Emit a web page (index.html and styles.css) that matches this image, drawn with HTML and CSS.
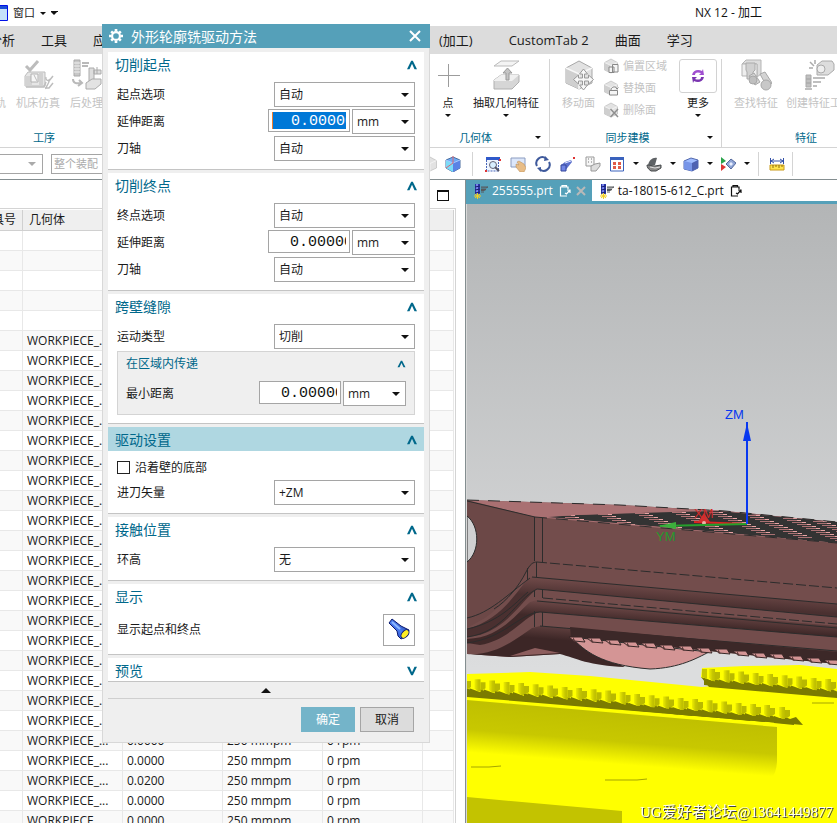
FILE: index.html
```
<!DOCTYPE html>
<html lang="zh-CN">
<head>
<meta charset="utf-8">
<title>NX 12 - 加工</title>
<link rel="stylesheet" href="styles.css">
</head>
<body>
<svg class="defs" aria-hidden="true">
  <defs>
    <symbol id="i-chev" viewBox="0 0 12 12"><path d="M0 11 5 1h2l5 10H9L6 4.500 3 11z" fill="#00688b"/></symbol>
    <symbol id="i-drill" viewBox="0 0 16 16"><path d="M3 1h5v10H3z" fill="#2a35a8"/><path d="M4 1h2v10H4z" fill="#7883ea"/><path d="M3 4l5-1M3 7l5-1M3 10l5-1" stroke="#1a1f70"/><path d="M9 4h7l-2 1H9M9 6.500h5l-2 1H9M9 9h3" fill="none" stroke="#56595c"/><path d="M5.500 10v6M2 13h7M3 11l5 4M8 11l-5 4" stroke="#f5d020"/></symbol>
    <symbol id="i-clip" viewBox="0 0 12 12"><path d="M8 11H1.500V2H9v2M3 2V.700h4.500V2M11 5 7.500 9 6 8M8 5h3v3" fill="none" stroke="currentColor" stroke-width="1.200"/></symbol>
    <symbol id="i-cube" viewBox="0 0 32 32"><path d="M3 9 16 2l13 7v15l-13 6L3 24z" fill="#e2e2e2" stroke="#a8a8a8"/><path d="M3 9l13 6v15L3 24z" fill="#cfcfcf"/><path d="M3 9l13 6 13-6M16 15v15" fill="none" stroke="#f8f8f8" stroke-width="1.500"/></symbol>
    <linearGradient id="g-lamp" x1="0" y1="1" x2="1" y2="0"><stop offset="0" stop-color="#1735b5"/><stop offset=".5" stop-color="#4a7df0"/><stop offset="1" stop-color="#101e70"/></linearGradient>
  </defs>
</svg>

<header class="titlebar">
  <svg class="win-icon" viewBox="0 0 8 16"><path d="M-8 .500H7.500v15H-8z" fill="#c6e2fa" stroke="#0010e8"/><path d="M0 1h7v3H0z" fill="#1d4fd8"/></svg>
  <button class="window-menu">窗口 <i class="tri"></i><i class="tri barred"></i></button>
  <h1>NX 12 - 加工</h1>
</header>

<nav class="menubar">
  <div class="menu-left"><a href="#">分析</a><a href="#">工具</a><a href="#">应用</a></div>
  <div class="menu-right"><a href="#">(加工)</a><a href="#">CustomTab 2</a><a href="#">曲面</a><a href="#">学习</a></div>
</nav>

<section class="ribbon">
  <div class="group g-process">
    <div class="tools">
      <button class="tool off t-path"><svg viewBox="0 0 32 32"></svg>刀轨</button>
      <button class="tool off t-sim"><svg viewBox="0 0 32 32"><path d="M3 17l3-4h17v14H3z" fill="#e6e6e6" stroke="#bcbcbc"/><path d="M3 17h7v10H3z" fill="#d3d3d3"/><path d="M9 15h7v8H9z" fill="#f6f6f6" stroke="#b2b2b2"/><path d="M12 16l3 6M18 14v12M20 14v12" stroke="#bcbcbc"/><path d="M4 7l4 4 8-9" fill="none" stroke="#bcbcbc" stroke-width="3"/><path d="M4 28h18l2-5M24 18c-1 3 2 4 3 3 1 4-4 6-3 9M31 17l-4 5M31 24l-4 5h-4" fill="none" stroke="#bdbdbd" stroke-width="1.500"/></svg>机床仿真</button>
      <button class="tool off"><svg viewBox="0 0 32 32"><path d="M3 1h6v16H3z" fill="#c8c8c8" stroke="#aaa"/><path d="M3 4h6M3 7h6M3 10h6M3 13h6" stroke="#f0f0f0"/><path d="M11 4h7M11 7h6M2 20c0 4 3 5 8 4M8 21l3 3-4 3" fill="none" stroke="#b9b9b9" stroke-width="2"/><path d="M18 9h5v13h-5zM26 8v7M23 11h7v4h-7z" fill="#ddd" stroke="#aaa"/><path d="M15 24l6-4h9v5l-6 5h-9z" fill="#e3e3e3" stroke="#aaa"/></svg>后处理</button>
    </div>
    <div class="group-name">工序</div>
  </div>
  <div class="group g-geom">
    <div class="tools">
      <button class="tool t-point"><svg viewBox="0 0 32 32"><path d="M16.500 5v23M6 16.500h22" stroke="#9c9c9c"/></svg>点<i class="tri"></i></button>
      <button class="tool"><svg viewBox="0 0 32 32"><path d="M11 2h18l-7 5H4z" fill="#f4f4f4" stroke="#bbb"/><path d="M4 21l7-5h18v7l-7 7H4z" fill="#d6d6d6" stroke="#b0b0b0"/><path d="M4 21l7-5h18l-7 6H4z" fill="#f0f0f0"/><path d="M16 21v-7h-3l4.500-5 4.500 5h-3v7z" fill="#c4c4c4" stroke="#999"/></svg>抽取几何特征<i class="tri"></i></button>
    </div>
    <div class="group-name">几何体<i class="tri"></i></div>
  </div>
  <div class="group g-sync">
    <div class="tools">
      <button class="tool off"><svg viewBox="0 0 32 32"><use href="#i-cube"/><path d="M20.500 10l4 5h-3v4h4v-3l5 4.500-5 4.500v-3h-4v4h3l-4 5-4-5h3v-4h-4v3l-5-4.500 5-4.500v3h4v-4h-3z" fill="#f8f8f8" stroke="#999"/></svg>移动面</button>
      <div class="stack">
        <button class="line off"><svg viewBox="0 0 32 32"><use href="#i-cube"/><path d="M12 18h10v11H12zM19 13h11v15H19z" fill="#f5f5f5" stroke="#888" stroke-width="2"/></svg>偏置区域</button>
        <button class="line off"><svg viewBox="0 0 32 32"><use href="#i-cube"/><path d="M13 21h16v9H13zM16 21c0-9 11-9 12-3M26 15l2 3 3-3" fill="#f5f5f5" stroke="#888" stroke-width="2"/></svg>替换面</button>
        <button class="line off"><svg viewBox="0 0 32 32"><use href="#i-cube"/><path d="M15 14l15 16M30 14 15 30" stroke="#8f8f8f" stroke-width="3"/></svg>删除面</button>
      </div>
      <button class="tool more"><span class="more-box"><svg viewBox="0 0 16 16"><path d="M2 7c1-5 6-6 10-4l1-2 1 6H9l2-2C8 4 5 4 5 7z" fill="#a04fd0"/><path d="M14 9c-1 5-6 6-10 4l-1 2-1-6h5l-2 2c3 1 6 1 6-2z" fill="#7a35b0"/></svg></span>更多<i class="tri"></i></button>
    </div>
    <div class="group-name">同步建模<i class="tri"></i></div>
  </div>
  <div class="group g-feature">
    <div class="tools">
      <button class="tool off"><svg viewBox="0 0 32 32"><path d="M2 5l4-4h15v14l-4 3V5z" fill="#ddd" stroke="#b5b5b5"/><path d="M2 5h15v12H2z" fill="#eee" stroke="#b5b5b5"/><path d="M6 4h9v7l-2 2v7H7v-7l-1-2z" fill="#d0d0d0" stroke="#aaa"/><path d="M9 17l5-3 6 9-5 3zM20 15l5-2 7 11-5 4z" fill="#d4d4d4" stroke="#a8a8a8"/><circle cx="13" cy="21" r="4" fill="#bfbfbf" stroke="#a8a8a8"/><circle cx="26" cy="26" r="5" fill="#c8c8c8" stroke="#a8a8a8"/></svg>查找特征</button>
      <button class="tool off"><svg viewBox="0 0 32 32"><path d="M14 6l5-4h10l2 3v6l-6 5H14z" fill="#ddd" stroke="#aaa"/><circle cx="18" cy="10" r="4" fill="#eee" stroke="#aaa"/><path d="M3 16h5v12H3z" fill="#c0c0c0" stroke="#aaa"/><path d="M3 20h5M3 24h5M2 30h7M10 19h12M10 23h8M10 27h4M7 3l4 4M12 1v4M6 9h4" stroke="#aaa" stroke-width="1.500"/></svg>创建特征工艺</button>
    </div>
    <div class="group-name">特征</div>
  </div>
</section>

<section class="toolbar">
  <div class="filters">
    <button class="filter f-type" aria-label="类型过滤器"><i class="tri"></i></button>
    <button class="filter f-scope">整个装配</button>
  </div>
  <button class="ico" aria-label="线框"><svg viewBox="0 0 32 32"><use href="#i-cube"/></svg></button>
  <button class="ico shaded" aria-label="着色"><svg viewBox="0 0 16 16"><path d="M1 4l7-3 7 3v8l-7 4-7-4z" fill="#6caaf5" stroke="#4c6e9f"/><path d="M1 4l7 3v9l-7-4z" fill="#7cdcf8"/><path d="M8 7l7-3v8l-7 4z" fill="#5a83e5"/><path d="M1 4l7 3 7-3" fill="none" stroke="#a8c8ff"/><path d="M8 0v7M8 7l-7 5" fill="none" stroke="#dd6675"/></svg></button>
  <i class="sep"></i>
  <button class="ico" aria-label="缩放"><svg viewBox="0 0 16 16"><path d="M1 1h14v3H1z" fill="#2f59ca"/><path d="M1.500 4v11h12V4" fill="#eef5ff" stroke="#4966b8" stroke-dasharray="2 1"/><circle cx="8" cy="9" r="3.500" fill="#d8efff" stroke="#667"/><path d="M10 11l4 4" stroke="#556" stroke-width="2"/><path d="M14 3h2v2h-2zM0 14h2v2H0z" fill="#e03434"/></svg></button>
  <button class="ico" aria-label="平移"><svg viewBox="0 0 16 16"><path d="M1 2h14v9H1z" fill="#dce7fa" stroke="#8b9cc0"/><path d="M6 8l3 1-2-3 2-1 5 3 2 4-2 4h-4L6 11z" fill="#e8bd87" stroke="#b68850" stroke-width=".5"/></svg></button>
  <button class="ico" aria-label="旋转"><svg viewBox="0 0 16 16"><path d="M2 10A6 6 0 0 1 11 2.500M14 6A6 6 0 0 1 5 13.500" fill="none" stroke="#3f5a9c" stroke-width="2"/><path d="M10 0l4 4-5 1zM6 11l-4 1 4 4z" fill="#3f5a9c"/></svg></button>
  <button class="ico" aria-label="透视"><svg viewBox="0 0 16 16"><path d="M1 9l4-3 6-2 1 2-4 5-3 4H1z" fill="#5c70cc"/><path d="M1 9h5v6H1z" fill="#6f84e5" stroke="#35479a"/><path d="M5 7l6-2" stroke="#e1e7ff"/><path d="M13 1h2v2h-2z" fill="#d33"/></svg></button>
  <button class="ico" aria-label="属性"><svg viewBox="0 0 16 16"><path d="M1 1h8v9H1z" fill="#f6f6f6" stroke="#999"/><path d="M3 3h1M6 3h1M3 6h1M6 6h1" stroke="#777"/><path d="M6 10l4-2 5-1v3l-4 5H6z" fill="#ddd" stroke="#999"/></svg></button>
  <button class="ico drop" aria-label="布局"><svg viewBox="0 0 16 16"><path d="M1.500 2h13v13h-13z" fill="#fff" stroke="#3a62bd"/><path d="M1 1h14v3H1z" fill="#3a62bd"/><path d="M4 6h3v3H4zM9 6h3v3H9zM4 10h3v3H4zM9 10h3v3H9z" fill="#e05a48"/></svg><i class="tri"></i></button>
  <button class="ico drop" aria-label="渲染"><svg viewBox="0 0 16 16"><path d="M2 9C3 4 7 1 11 2l-2 7z" fill="#5e6265"/><path d="M1 9l8 1 6-1v3l-5 3H5c-3-2-4-4-4-6z" fill="#888" stroke="#44484a"/><path d="M4 11l5 1 5-1" stroke="#ddd" fill="none"/></svg><i class="tri"></i></button>
  <button class="ico drop" aria-label="视图方位"><svg viewBox="0 0 16 16"><path d="M1 5l7-3 7 2v8l-6 3-8-2z" fill="#9fbcff" stroke="#5268ad"/><path d="M9 7l6-3v8l-6 3z" fill="#4e62b2"/><path d="M1 5l8 2v8l-8-2z" fill="#7795e8"/></svg><i class="tri"></i></button>
  <button class="ico drop" aria-label="剖切"><svg viewBox="0 0 16 16"><path d="M1 1l5 4-5 3z" fill="#29a34a"/><path d="M1 8l5 3-5 4z" fill="#dd3434"/><path d="M6 8l5-5 5 4-5 6z" fill="#8fa5d6" stroke="#566a9d"/><path d="M9 8l2-2 2 2-2 2z" fill="#e9efff"/></svg><i class="tri"></i></button>
  <i class="sep"></i>
  <button class="ico ruler" aria-label="测量"><svg viewBox="0 0 16 16"><path d="M1.500 2v6M14.500 2v6M2 5h12M5 3 2 5l3 2M11 3l3 2-3 2" fill="none" stroke="#3250a8"/><path d="M1 9h14v5H1z" fill="#ffe34d" stroke="#c99a1a"/><path d="M4 9v3M7 9v2M10 9v3M13 9v2" stroke="#8b6c10"/></svg></button>
  <i class="sep"></i>
</section>

<main class="work">
  <section class="navigator">
    <div class="nav-head"><button class="maximize" aria-label="最大化"></button></div>
    <div class="table-wrap">
      <table>
        <colgroup><col class="c0"><col class="c"><col class="c"><col class="c"><col class="c"><col></colgroup>
        <thead><tr><th><span>刀具号</span></th><th>几何体</th><th></th><th></th><th></th><th></th></tr></thead>
        <tbody>
          <tr><td></td><td></td><td></td><td></td><td></td><td></td></tr>
          <tr><td></td><td></td><td></td><td></td><td></td><td></td></tr>
          <tr><td></td><td></td><td></td><td></td><td></td><td></td></tr>
          <tr><td></td><td></td><td></td><td></td><td></td><td></td></tr>
          <tr><td></td><td></td><td></td><td></td><td></td><td></td></tr>
          <tr><td></td><td>WORKPIECE_...</td><td></td><td></td><td></td><td></td></tr>
          <tr><td></td><td>WORKPIECE_...</td><td></td><td></td><td></td><td></td></tr>
          <tr><td></td><td>WORKPIECE_...</td><td></td><td></td><td></td><td></td></tr>
          <tr><td></td><td>WORKPIECE_...</td><td></td><td></td><td></td><td></td></tr>
          <tr><td></td><td>WORKPIECE_...</td><td></td><td></td><td></td><td></td></tr>
          <tr><td></td><td>WORKPIECE_...</td><td></td><td></td><td></td><td></td></tr>
          <tr><td></td><td>WORKPIECE_...</td><td></td><td></td><td></td><td></td></tr>
          <tr><td></td><td>WORKPIECE_...</td><td></td><td></td><td></td><td></td></tr>
          <tr><td></td><td>WORKPIECE_...</td><td></td><td></td><td></td><td></td></tr>
          <tr><td></td><td>WORKPIECE_...</td><td></td><td></td><td></td><td></td></tr>
          <tr><td></td><td>WORKPIECE_...</td><td></td><td></td><td></td><td></td></tr>
          <tr><td></td><td>WORKPIECE_...</td><td></td><td></td><td></td><td></td></tr>
          <tr><td></td><td>WORKPIECE_...</td><td></td><td></td><td></td><td></td></tr>
          <tr><td></td><td>WORKPIECE_...</td><td></td><td></td><td></td><td></td></tr>
          <tr><td></td><td>WORKPIECE_...</td><td></td><td></td><td></td><td></td></tr>
          <tr><td></td><td>WORKPIECE_...</td><td></td><td></td><td></td><td></td></tr>
          <tr><td></td><td>WORKPIECE_...</td><td></td><td></td><td></td><td></td></tr>
          <tr><td></td><td>WORKPIECE_...</td><td></td><td></td><td></td><td></td></tr>
          <tr><td></td><td>WORKPIECE_...</td><td></td><td></td><td></td><td></td></tr>
          <tr><td></td><td>WORKPIECE_...</td><td></td><td></td><td></td><td></td></tr>
          <tr><td></td><td>WORKPIECE_...</td><td>0.0000</td><td>250 mmpm</td><td>0 rpm</td><td></td></tr>
          <tr><td></td><td>WORKPIECE_...</td><td>0.0000</td><td>250 mmpm</td><td>0 rpm</td><td></td></tr>
          <tr><td></td><td>WORKPIECE_...</td><td>0.0200</td><td>250 mmpm</td><td>0 rpm</td><td></td></tr>
          <tr><td></td><td>WORKPIECE_...</td><td>0.0000</td><td>250 mmpm</td><td>0 rpm</td><td></td></tr>
          <tr><td></td><td>WORKPIECE_...</td><td>0.0000</td><td>250 mmpm</td><td>0 rpm</td><td></td></tr>
        </tbody>
      </table>
    </div>
  </section>

  <section class="graphics">
    <div class="tabs">
      <a class="tab active" href="#"><svg class="drill"><use href="#i-drill"/></svg>255555.prt<svg class="clip"><use href="#i-clip"/></svg><svg class="tab-x" viewBox="0 0 10 10"><path d="M1 1l8 8M9 1 1 9" stroke="#b9b9b9" stroke-width="2"/></svg></a>
      <a class="tab" href="#"><svg class="drill"><use href="#i-drill"/></svg>ta-18015-612_C.prt<svg class="clip"><use href="#i-clip"/></svg></a>
    </div>
    <svg class="scene" viewBox="467 204 370 619" preserveAspectRatio="xMinYMin slice">
      <defs>
        <linearGradient id="sky" x1="0" y1="0" x2="0" y2="1"><stop offset="0" stop-color="#b3b5b6"/><stop offset=".75" stop-color="#dcddde"/></linearGradient>
        <linearGradient id="band" gradientUnits="userSpaceOnUse" x1="680" y1="588" x2="679" y2="604"><stop offset="0" stop-color="#6d4847"/><stop offset="1" stop-color="#4a3030"/></linearGradient>
        <linearGradient id="band2" gradientUnits="userSpaceOnUse" x1="680" y1="610" x2="679" y2="625"><stop offset="0" stop-color="#6d4847"/><stop offset="1" stop-color="#402929"/></linearGradient>
        <linearGradient id="band3" gradientUnits="userSpaceOnUse" x1="680" y1="638" x2="679" y2="650"><stop offset="0" stop-color="#5c3d3c"/><stop offset="1" stop-color="#3c2626"/></linearGradient>
        <linearGradient id="olive" gradientUnits="userSpaceOnUse" x1="620" y1="714" x2="616" y2="764"><stop offset="0" stop-color="#c0c000"/><stop offset=".55" stop-color="#c8c800"/><stop offset="1" stop-color="#ffff00"/></linearGradient>
        <linearGradient id="toothg"><stop offset="0" stop-color="#eeee00"/><stop offset=".6" stop-color="#c6c600"/><stop offset="1" stop-color="#bcbc00"/></linearGradient>
        <clipPath id="deck"><path d="M540 517 577 515 672 511 720 511 837 522V543L760 536 650 526z"/></clipPath>
        <g id="tooth"><path d="M-3 11 8 15V12L13 14 17 16V20L-3 18z" fill="#7b7b00"/><path d="M2 2h6v12H5L2 11z" fill="url(#toothg)"/><path d="M8 5h5v6l-3 2H8z" fill="#b9b900"/></g>
        <g id="tooth4"><use href="#tooth"/><use href="#tooth" x="14.500" y="1.300"/><use href="#tooth" x="29" y="2.600"/><use href="#tooth" x="43.500" y="3.900"/></g>
        <g id="nick"><path d="M0 0h13l3 5-11-1z" fill="#d49595" stroke="#382727"/><path d="M4 0l3 5-3-1z" fill="#5c3d3c"/></g>
        <g id="stair"><path d="M-10 .500H4M-6 2.500H8M-1 4.500H13M4 6.500H18M9 8.500H23M13 10.500H27M18 12.500H32M23 14.500H37M27 16.500H41M32 18.500H46M37 20.500H51M42 22.500H56" stroke="#a97072"/><path d="M0 .500H4M4 2.500H8M9 4.500H13M14 6.500H18M19 8.500H23M23 10.500H27M28 12.500H32M33 14.500H37M37 16.500H41M42 18.500H46M47 20.500H51" stroke="#e8a5a5"/></g>
      </defs>
      <path d="M467 204h370v619H467z" fill="url(#sky)"/>
      <path d="M467 500 620 505 725 511 837 522V664L570 637 560 654 510 657 467 654z" fill="#734d4c"/>
      <path d="M467 502 535 517V561L528 569C518 588 506 603 485 618L467 628z" fill="#6c4847"/>
      <path d="M467 500 620 505 725 511 837 522V543L535 517z" fill="#a97072"/>
      <g clip-path="url(#deck)">
        <path d="M548 517 577 515 672 512 720 511 837 522V543L760 536 650 526z" fill="#333"/>
        <use href="#stair" x="571" y="515"/><use href="#stair" x="608" y="514"/><use href="#stair" x="645" y="513"/><use href="#stair" x="682" y="512"/><use href="#stair" x="719" y="512"/><use href="#stair" x="756" y="515"/><use href="#stair" x="793" y="518"/><use href="#stair" x="823" y="521"/>
      </g>
      <path d="M467 500 620 505 725 511 837 522M535 517 837 543" fill="none" stroke="#2c2c2c" stroke-dasharray="12 9"/>
      <path d="M467 501 535 517" stroke="#2c2c2c"/>
      <path d="M467 516C480 526 480 552 467 562z" fill="#d0d1d2" stroke="#2c2c2c"/>
      <path d="M532 577 837 604V617L537 589C522 600 510 625 480 635L467 637V629C500 620 515 594 527 580z" fill="url(#band)"/>
      <path d="M537 600 837 626V637L540 612C525 615 510 640 480 645L467 643V639C500 638 515 615 530 602z" fill="url(#band2)"/>
      <path d="M540 626 837 651V664L570 637 590 649 625 667C590 666 575 658 560 654L510 657 467 654C495 656 515 640 532 628z" fill="url(#band3)"/>
      <path d="M510 656 535 648 560 653z" fill="#8d5e5e"/>
      <path d="M534.500 517V561M542.500 518V562M527.500 568V580M536.500 562V577M534.500 590V597M542.500 590V598M534.500 611V627M542.500 612V626" stroke="#2c2c2c"/>
      <path d="M537 562 837 588M543 598 837 624" stroke="#2c2c2c" stroke-dasharray="10 3"/>
      <path d="M532 577 837 604M537 589 837 617M537 601 837 628M540 612 837 637M540 626 837 651" stroke="#2c2c2c" fill="none"/>
      <path d="M494 609C507 601 519 586 526 572 530 564 533 562 537 562M467 618C490 613 507 595 530 578M467 629C500 622 515 603 528 592M467 637C505 632 515 600 537 589M467 643C505 638 520 613 540 612" fill="none" stroke="#2c2c2c"/>
      <path d="M571 637C585 651 600 665 650 669 680 668 697 658 709 652z" fill="#d49595" stroke="#2c2c2c"/>
      <path d="M571 637 837 663V652L570 627z" fill="#3c2828"/>
      <use href="#nick" x="569" y="637"/><use href="#nick" x="587" y="638"/><use href="#nick" x="605" y="640"/><use href="#nick" x="623" y="642"/><use href="#nick" x="641" y="643"/><use href="#nick" x="659" y="645"/><use href="#nick" x="678" y="646"/><use href="#nick" x="696" y="648"/><use href="#nick" x="714" y="649"/><use href="#nick" x="733" y="651"/><use href="#nick" x="751" y="653"/><use href="#nick" x="769" y="654"/><use href="#nick" x="788" y="656"/><use href="#nick" x="806" y="658"/><use href="#nick" x="824" y="660"/>

      <path d="M467 674 530 672 590 676 702 687 712 686 701 677 702 668 745 666 800 665 837 669V823H467z" fill="#ff0"/>
      <path d="M467 691 790 719 796 717 803 725 467 697z" fill="#7b7b00"/>
      <use href="#tooth4" x="458" y="676"/><use href="#tooth4" x="516" y="681"/><use href="#tooth4" x="574" y="686"/><use href="#tooth4" x="632" y="692"/><use href="#tooth4" x="690" y="697"/><use href="#tooth" x="748" y="702"/><use href="#tooth" x="762" y="703"/><use href="#tooth" x="777" y="705"/>
      <path d="M701 677 709 687 837 698V692L712 681z" fill="#7b7b00"/>
      <use href="#tooth4" x="707" y="667"/><use href="#tooth4" x="765" y="672"/><use href="#tooth" x="823" y="677"/>
      <path d="M702 669h5v10l-5-2z" fill="#c6c600"/>
      <path d="M467 700 777 727V760Q777 772 771 779L467 752z" fill="url(#olive)"/>
      <path d="M467 797 622 811V823H467z" fill="#c3c300"/>
      <path d="M471 767h18l12-1M605 780h32l10-1M812 703h22" fill="none" stroke="#a5a500"/>

      <path d="M747 524 694 522" stroke="#d22" stroke-width="2"/><path d="M698 522l6-9 6 9z" fill="#d03030"/><circle cx="704" cy="523" r="2" fill="#efb0a8"/>
      <path d="M747 524 660 526" stroke="#25a02c" stroke-width="2"/><path d="M658 526l18-4v7z" fill="#3cae3c"/>
      <path d="M747 524V422" stroke="#0838f0" stroke-width="2"/><path d="M743 441l4-18 4 18z" fill="#0838f0"/>
      <text class="axis" x="725" y="419" fill="#0838f0">ZM</text>
      <text class="axis" x="694" y="518" fill="#d22a2a">XM</text>
      <text class="axis" x="656" y="541" fill="#259a2c">YM</text>
      <text class="mark" x="640" y="817">UG爱好者论坛@13641449877</text>
    </svg>
  </section>
</main>

<form class="dialog" role="dialog" aria-labelledby="dlg-title">
  <header class="dlg-head">
    <svg class="gear" viewBox="0 0 16 16"><path d="M6.500 0h3v2.500h-3zM6.500 13.500h3V16h-3zM0 6.500h2.500v3H0zM13.500 6.500H16v3h-2.500zM1.500 3.600l2-2 2 2-2 2zM10.500 3.600l2-2 2 2-2 2zM1.500 12.400l2-2 2 2-2 2zM10.500 12.400l2-2 2 2-2 2z" fill="#fff"/><circle cx="8" cy="8" r="4.500" fill="none" stroke="#fff" stroke-width="2.500"/></svg>
    <h2 id="dlg-title">外形轮廓铣驱动方法</h2>
    <button type="button" class="close" aria-label="关闭"><svg viewBox="0 0 12 12"><path d="M1 1l10 10M11 1 1 11" stroke="#fff" stroke-width="2"/></svg></button>
  </header>

  <section class="sec">
    <h3>切削起点<svg><use href="#i-chev"/></svg></h3>
    <div class="rows">
      <div class="row"><label for="s1">起点选项</label><span class="sel"><select id="s1"><option>自动</option></select></span></div>
      <div class="row"><label for="d1">延伸距离</label><span class="num picked"><input id="d1" value="0.00000"></span><span class="sel unit"><select aria-label="单位"><option>mm</option></select></span></div>
      <div class="row"><label for="a1">刀轴</label><span class="sel"><select id="a1"><option>自动</option></select></span></div>
    </div>
  </section>
  <section class="sec">
    <h3>切削终点<svg><use href="#i-chev"/></svg></h3>
    <div class="rows">
      <div class="row"><label for="s2">终点选项</label><span class="sel"><select id="s2"><option>自动</option></select></span></div>
      <div class="row"><label for="d2">延伸距离</label><span class="num"><input id="d2" value="0.00000"></span><span class="sel unit"><select aria-label="单位"><option>mm</option></select></span></div>
      <div class="row"><label for="a2">刀轴</label><span class="sel"><select id="a2"><option>自动</option></select></span></div>
    </div>
  </section>
  <section class="sec">
    <h3>跨壁缝隙<svg><use href="#i-chev"/></svg></h3>
    <div class="rows">
      <div class="row"><label for="m1">运动类型</label><span class="sel"><select id="m1"><option>切削</option></select></span></div>
      <div class="sub">
        <h4>在区域内传递<svg><use href="#i-chev"/></svg></h4>
        <div class="row"><label for="d3">最小距离</label><span class="num"><input id="d3" value="0.00000"></span><span class="sel unit"><select aria-label="单位"><option>mm</option></select></span></div>
      </div>
    </div>
  </section>
  <section class="sec">
    <h3 class="lit">驱动设置<svg><use href="#i-chev"/></svg></h3>
    <div class="rows">
      <div class="check"><input type="checkbox" id="k1"><label for="k1">沿着壁的底部</label></div>
      <div class="row"><label for="v1">进刀矢量</label><span class="sel"><select id="v1"><option>+ZM</option></select></span></div>
    </div>
  </section>
  <section class="sec">
    <h3>接触位置<svg><use href="#i-chev"/></svg></h3>
    <div class="rows">
      <div class="row"><label for="h1">环高</label><span class="sel"><select id="h1"><option>无</option></select></span></div>
    </div>
  </section>
  <section class="sec">
    <h3>显示<svg><use href="#i-chev"/></svg></h3>
    <div class="rows">
      <div class="row tall"><label for="b1">显示起点和终点</label><button type="button" id="b1" class="torch" aria-label="显示起点和终点"><svg viewBox="0 0 24 24"><path d="M2 5 5 1 14 8l8 4-2 6-6 3-3-3-1-5z" fill="url(#g-lamp)" stroke="#0b1a70"/><path d="M5 4l8 7" stroke="#8cb8ff" stroke-width="2"/><ellipse cx="18" cy="16" rx="5" ry="3" transform="rotate(-48 18 16)" fill="#ffee22" stroke="#0a1670"/></svg></button></div>
    </div>
  </section>
  <section class="sec shut">
    <h3>预览<svg class="down"><use href="#i-chev"/></svg></h3>
  </section>
  <button type="button" class="collapse" aria-label="收起"><i class="tri up"></i></button>
  <footer class="dlg-foot"><button type="button" class="ok">确定</button><button type="button" class="cancel">取消</button></footer>
</form>
</body>
</html>
```
FILE: styles.css
```
* { box-sizing: border-box; }
body {
  margin: 0;
  height: 100vh;
  overflow: hidden;
  position: relative;
  display: flex;
  flex-direction: column;
  background: #fff;
  color: #1a1a1a;
  font: 12px/16px "Open Sans", "Noto Sans CJK SC", sans-serif;
}
button { font: inherit; color: inherit; background: none; border: 0; padding: 0; }
a { color: inherit; text-decoration: none; }
h1, h2, h3, h4 { margin: 0; font-weight: 400; }
svg { display: block; flex: none; }
.defs { position: absolute; width: 0; height: 0; }

.tri { display: inline-block; flex: none; border: 3px solid transparent; border-top-color: #111; border-bottom: 0; }
.tri.up { border: 5px solid transparent; border-bottom-color: #111; border-top: 0; }

/* Title bar */
.titlebar { flex: none; height: 26px; display: flex; align-items: center; }
.win-icon { width: 8px; height: 16px; }
.window-menu { display: flex; align-items: center; gap: 5px; margin-left: 5px; flex: 1; font-size: 11px; }
.tri.barred { position: relative; }
.tri.barred::before { content: ""; position: absolute; left: -3px; top: -4px; width: 7px; height: 1px; background: #111; }
.titlebar h1 { width: 142px; font-size: 12px; color: #111; }

/* Menu */
.menubar { flex: none; height: 28px; display: flex; align-items: center; background: #dcdcdc; font-size: 13px; }
.menubar div { display: flex; gap: 26px; white-space: nowrap; }
.menu-left { flex: 0 0 439px; padding-left: 41px; }
.menu-left a:first-child { margin-left: -52px; }
.menu-right a:first-child { margin-right: 10px; }

/* Ribbon */
.ribbon { flex: none; height: 94px; display: flex; border-bottom: 1px solid #d4d4d4; overflow: hidden; font-size: 11px; }
.group { flex: none; display: flex; flex-direction: column; border-right: 1px solid #d4d4d4; margin: 5px 0 0; }
.g-process { width: 422px; border: 0; }
.g-geom { width: 128px; }
.g-sync { width: 172px; }
.g-feature { width: 168px; border: 0; }
.tools { flex: 1; display: flex; align-items: flex-start; }
.tool { flex: none; display: flex; flex-direction: column; align-items: center; white-space: nowrap; line-height: 14px; }
.tool > svg { width: 32px; height: 32px; margin-bottom: 5px; }
.tool .tri { margin-top: 4px; }
.off { color: #c3c3c3; }
.g-process .tools { gap: 10px; }
.tool.t-path { margin-left: -16px; }
.tool.t-path svg { width: 22px; }
.g-geom .tools { padding-left: 9px; gap: 8px; }
.t-point { width: 34px; }
.g-sync .tools { padding: 0 4px 0 12px; gap: 10px; }
.stack { flex: 1; margin-top: -4px; padding-left: 0; }
.line { display: flex; align-items: center; gap: 4px; height: 22px; white-space: nowrap; }
.line svg { width: 16px; height: 16px; }
.g-sync .stack { margin-left: -2px; }
.more-box { display: grid; place-items: center; width: 38px; height: 34px; margin-bottom: 3px; border: 1px solid #d2d2d2; border-radius: 3px; }
.more-box svg { width: 16px; height: 16px; }
.g-feature .tools { padding-left: 12px; gap: 8px; }
.group-name { position: relative; text-align: center; line-height: 18px; color: #00688b; }
.g-process .group-name { width: 88px; }
.g-geom .group-name { padding-right: 20px; }
.g-sync .group-name { padding-right: 16px; }
.group-name .tri { position: absolute; right: 8px; top: 7px; }

/* Selection bar */
.toolbar { flex: none; height: 32px; display: flex; align-items: center; border-bottom: 1px solid #848e90; }
.filters { flex: 0 0 417px; display: flex; gap: 8px; color: #aaa; font-size: 11px; }
.filter { height: 20px; border: 1px solid #a5a5a5; }
.f-type { width: 43px; border-left: 0; display: flex; align-items: center; justify-content: flex-end; padding-right: 6px; }
.f-type .tri { border-width: 4px 4px 0; border-top-color: #aaa; }
.f-scope { width: 90px; padding-left: 2px; text-align: left; }
.ico { flex: none; width: 25px; display: flex; justify-content: center; }
.ico svg { width: 16px; height: 16px; }
.shaded { padding-right: 4px; }
.drop { width: 37px; align-items: center; padding-left: 4px; justify-content: flex-start; gap: 8px; }
.sep { flex: none; width: 1px; height: 24px; margin: 0 7px 0 5px; background: #d4d4d4; }
.ruler { margin: 0 -2px; }

/* Work area */
.work { flex: 1; min-height: 0; display: flex; }
.navigator { flex: 0 0 465px; display: flex; flex-direction: column; overflow: hidden; }
.nav-head { flex: none; height: 28px; display: flex; justify-content: flex-end; align-items: center; padding: 2px 16px 0 0; }
.maximize { width: 12px; height: 11px; border: 1px solid #111; border-top-width: 2px; }
.table-wrap { flex: 1; min-height: 0; overflow: hidden; width: 456px; border: solid #d4d4d4; border-width: 1px 1px 0 0; padding: 1px 1px 0 0; }
table { width: 100%; border-collapse: separate; border-spacing: 0; table-layout: fixed; }
.c0 { width: 23px; }
.c { width: 100px; }
th, td { height: 20px; padding: 0 0 0 4px; line-height: 16px; text-align: left; font-weight: 400; white-space: nowrap; overflow: hidden; border: solid #e8e8e8; border-width: 0 1px 1px 0; }
th { height: 21px; padding-left: 6px; background: #efefef; border-color: #d0d0d0; }
th:first-child { padding: 0 7px 0 0; direction: rtl; }
tbody tr:nth-child(even) { background: #f9f9f9; }

.graphics { flex: 1; min-width: 0; display: flex; flex-direction: column; border-left: 1px solid #848e90; }
.tabs { flex: none; height: 24px; display: flex; border-bottom: 3px solid #55a0b9; }
.tab { display: flex; align-items: center; padding: 0 6px; white-space: nowrap; color: #111; }
.tab.active { background: #55a0b9; color: #fff; }
.drill { width: 16px; height: 16px; margin-right: 4px; }
.clip { width: 12px; height: 12px; margin-left: 6px; }
.tab-x { width: 10px; height: 10px; margin-left: 5px; }
.scene { flex: 1; min-height: 0; width: 100%; border-left: 1px solid #d8d8d8; }
.axis { font: 13px "Liberation Sans", sans-serif; }
.mark { font: 15px "Liberation Serif", "Noto Sans CJK SC", serif; fill: #fffff0; filter: drop-shadow(1px 1px 0 #444); }

/* Dialog */
.dialog { position: absolute; left: 102px; top: 24px; width: 328px; background: #efefef; border: solid #d8d8d8; border-width: 0 1px 1px; }
.dlg-head { height: 24px; margin: 0 -1px; padding: 0 9px 0 7px; display: flex; align-items: center; background: #55a0b9; color: #fff; }
.gear { width: 14px; height: 14px; }
.dlg-head h2 { flex: 1; margin-left: 8px; padding-top: 2px; font-size: 14px; }
.close svg { width: 12px; height: 12px; }
.sec { margin: 4px 5px 3px; background: #fff; border-bottom: 1px solid #c4c4c4; }
.sec + .sec { margin-top: 0; }
.sec h3 { height: 24px; padding: 2px 6px 0 7px; display: flex; align-items: center; justify-content: space-between; font-size: 14px; line-height: 22px; color: #00688b; }
.sec h3 svg { width: 12px; height: 10px; }
.sec h3.lit { background: #afd7e1; }
.sec h3 .down { transform: scaleY(-1); }
.sec.shut { margin-bottom: 0; }
.sec.shut h3 { height: 23px; }
.rows { display: flex; flex-direction: column; gap: 2px; padding: 6px 9px 8px; }
.row { display: flex; gap: 2px; align-items: flex-start; }
.row label { flex: 1; line-height: 25px; }
.tall label { line-height: 32px; }
.sel { position: relative; flex: 0 0 141px; height: 25px; }
.sel.unit { flex-basis: 63px; }
.sel select { appearance: none; width: 100%; height: 100%; padding: 0 4px; border: 1px solid #a5a5a5; border-radius: 0; background: #fff; color: inherit; font: inherit; }
.sel::after { content: ""; position: absolute; right: 6px; top: 11px; border: 4px solid transparent; border-top-color: #111; border-bottom: 0; pointer-events: none; }
.num { flex: 0 0 82px; height: 23px; padding: 2px 3px; border: 1px solid #a5a5a5; background: #fff; display: flex; }
.num input { width: 100%; height: 100%; border: 0; padding: 2px 0 0 18px; background: none; color: #111; font: 15px "Liberation Mono", monospace; }
.picked input { background: #0078d7; color: #fff; border-left: 1px solid #f08030; }
.sub { border: 1px solid #d4d4d4; background: #efefef; padding: 0 8px 8px; }
.sub h4 { display: flex; align-items: center; justify-content: space-between; height: 24px; margin-bottom: 5px; color: #00688b; font-size: 12px; }
.sub h4 svg { width: 9px; height: 8px; }
.check { display: flex; align-items: center; height: 21px; gap: 5px; }
.check input { appearance: none; width: 13px; height: 13px; margin: 0; border: 1px solid #222; background: #fff; }
.torch { width: 32px; height: 32px; border: 1px solid #a5a5a5; display: grid; place-items: center; background: #fff; }
.torch svg { width: 24px; height: 24px; }
.collapse { display: flex; justify-content: center; align-items: center; width: calc(100% - 10px); height: 17px; margin: 0 5px; border-bottom: 1px solid #cfcfcf; }
.dlg-foot { display: flex; justify-content: flex-end; gap: 5px; padding: 8px 15px 10px; }
.dlg-foot button { width: 54px; height: 25px; }
.ok { background: #74b4c9; color: #fff; }
.cancel { background: #dcdcdc; border: 1px solid #a5a5a5; }
```
